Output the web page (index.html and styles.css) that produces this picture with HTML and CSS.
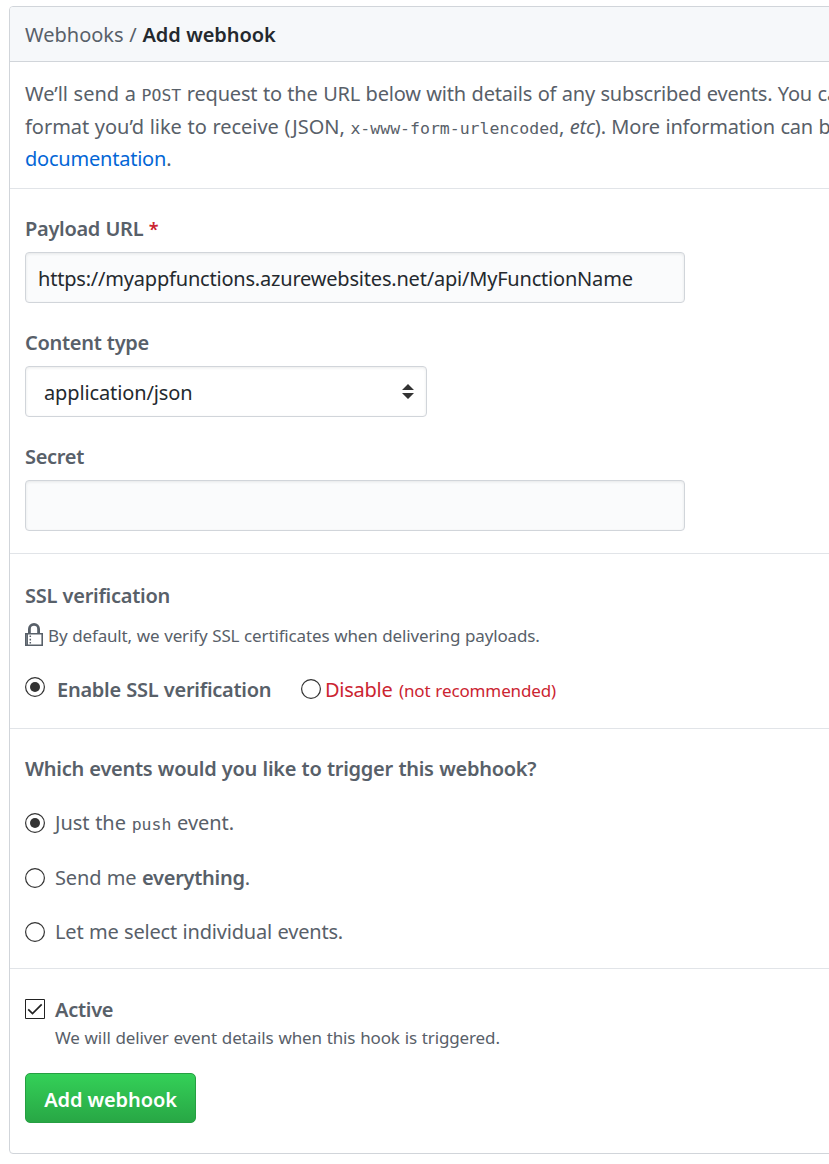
FILE: index.html
```html
<!DOCTYPE html>
<html lang="en">
<head>
<meta charset="utf-8">
<title>Add webhook</title>
<link rel="stylesheet" href="styles.css">
</head>
<body>
<main class="box">
  <header class="box-header"><span class="crumb">Webhooks / </span><strong class="current">Add webhook</strong></header>
  <section class="row intro">
    <p class="line"><span class="lead">We’ll send a </span><code>POST</code><span class="rest"> request to the URL below with details of any subscribed events. You ca</span></p>
    <p class="line"><span class="lead">format you’d like to receive (JSON, </span><code>x-www-form-urlencoded</code><span class="rest">, <em>etc</em>). More information can b</span></p>
    <p class="line"><a class="link" href="#">documentation</a>.</p>
  </section>
  <form class="form">
    <section class="row fields">
      <label class="label" for="url">Payload URL <span class="required">*</span></label>
      <input class="control" id="url" type="text" value="https://myappfunctions.azurewebsites.net/api/MyFunctionName">
      <label class="label">Content type</label>
      <div class="control select"><span class="select-text">application/json</span>
        <svg class="arrows" width="12" height="15" viewBox="0 0 12 15"><path fill="#333" d="M0 6 6 0l6 6zM0 9l6 6 6-6z"/></svg>
      </div>
      <label class="label" for="secret">Secret</label>
      <input class="control" id="secret" type="text">
    </section>
    <section class="row ssl">
      <h2 class="heading">SSL verification</h2>
      <p class="note">
        <svg class="lock" width="18" height="23" viewBox="0 0 18 23" fill="none" stroke="#586069"><path stroke-width="2.8" d="M4.4 11V6a4.6 4.6 0 0 1 9.2 0V11"/><path stroke-width="1.6" d="M.8 10.8h16.4v11.4H.8z"/><path stroke-width="1.5" d="M2.2 10v12.5"/><path stroke-width="1.5" stroke-dasharray="1.6 1.7" d="M5.3 12.5v8"/></svg>
        <span class="small">By default, we verify SSL certificates when delivering payloads.</span>
      </p>
      <div class="choices">
        <svg class="radio lifted" width="20" height="20" viewBox="0 0 20 20"><circle cx="10" cy="10" r="9.4" fill="#fff" stroke="#333" stroke-width="1.2"/><circle cx="10" cy="10" r="5" fill="#333"/></svg>
        <strong class="enable">Enable SSL verification</strong>
        <svg class="radio second" width="20" height="20" viewBox="0 0 20 20"><circle cx="10" cy="10" r="9.4" fill="#fff" stroke="#333" stroke-width="1.2"/></svg>
        <span class="disable">Disable</span><span class="small danger">(not recommended)</span>
      </div>
    </section>
    <section class="row events">
      <h2 class="heading">Which events would you like to trigger this webhook?</h2>
      <div class="option">
        <svg class="radio" width="20" height="20" viewBox="0 0 20 20"><circle cx="10" cy="10" r="9.4" fill="#fff" stroke="#333" stroke-width="1.2"/><circle cx="10" cy="10" r="5" fill="#333"/></svg>
        <span class="lead">Just the <code>push</code> event.</span>
      </div>
      <div class="option">
        <svg class="radio" width="20" height="20" viewBox="0 0 20 20"><circle cx="10" cy="10" r="9.4" fill="#fff" stroke="#333" stroke-width="1.2"/></svg>
        <span>Send me <strong>everything</strong>.</span>
      </div>
      <div class="option">
        <svg class="radio" width="20" height="20" viewBox="0 0 20 20"><circle cx="10" cy="10" r="9.4" fill="#fff" stroke="#333" stroke-width="1.2"/></svg>
        <span class="rest">Let me select individual events.</span>
      </div>
    </section>
    <section class="row submit">
      <div class="active">
        <svg class="check" width="20" height="20" viewBox="0 0 20 20"><path fill="#fff" stroke="#222" d="M.5.5h19v19H.5z"/><path fill="none" stroke="#222" stroke-width="1.7" d="m3.2 10.3 4.3 4.2 9.2-9.2"/></svg>
        <strong class="active-text">Active</strong>
      </div>
      <p class="small hint">We will deliver event details when this hook is triggered.</p>
      <button class="button" type="button">Add webhook</button>
    </section>
  </form>
</main>
</body>
</html>
```
FILE: styles.css
```css
* { box-sizing: border-box; }

body {
  margin: 0;
  padding: 6px 0 0 9px;
  height: 1164px;
  overflow: hidden;
  background: #fff;
  color: #586069;
  font: 20px/30px "Segoe UI", "Noto Sans", sans-serif;
  letter-spacing: -0.16px;
  word-spacing: 0.5px;
  white-space: nowrap;
}

p, h2 { margin: 0; }
strong { font-weight: 600; letter-spacing: -0.27px; }
code { font: 16.5px "DejaVu Sans Mono", monospace; letter-spacing: 0; }

.box {
  width: 840px;
  height: 1148px;
  border: 1px solid #d1d5da;
  border-radius: 4px;
  overflow: hidden;
}

.box-header {
  height: 55px;
  padding: 13px 15px 11px;
  background: #f6f8fa;
  border-bottom: 1px solid #d1d5da;
  white-space: pre;
}

.crumb { letter-spacing: 0; }
.current { color: #24292e; letter-spacing: -0.1px; }

.row { padding: 0 15px; border-bottom: 1px solid #e1e4e8; }
.row:last-child { border-bottom: 0; }

.intro { height: 127px; padding-top: 16px; }
.line { height: 32.5px; line-height: 32.5px; white-space: pre; }
.lead { letter-spacing: -0.03px; }
.rest { letter-spacing: -0.19px; }
.link { color: #0366d6; text-decoration: none; letter-spacing: -0.22px; }

.fields { display: flex; flex-direction: column; align-items: flex-start; height: 365px; padding-top: 25px; }
.label { flex: none; height: 30px; margin-bottom: 8px; font-weight: 600; letter-spacing: -0.3px; }
.required { color: #cb2431; font-size: 18px; }

.control {
  flex: none;
  width: 660px;
  height: 51px;
  margin: 0 0 25px;
  padding: 1px 12px 0;
  border: 1px solid #d1d5da;
  border-radius: 4px;
  background: #fafbfc;
  box-shadow: inset 0 1px 3px rgba(27, 31, 35, 0.09);
  color: #24292e;
  font: inherit;
  letter-spacing: -0.2px;
  outline: 0;
}

.control:last-child { margin-bottom: 0; }

.select {
  display: flex;
  align-items: center;
  justify-content: space-between;
  width: 402px;
  padding: 0 12px 0 18px;
  background: #fff;
}

.select-text { padding-top: 2px; letter-spacing: -0.12px; }

.ssl { height: 175px; padding-top: 27px; }
.heading { height: 30px; font-size: 20px; line-height: 30px; font-weight: 600; letter-spacing: -0.27px; }
.small { font-size: 17px; letter-spacing: -0.15px; }
.note { display: flex; align-items: center; gap: 5px; height: 30px; margin-top: 10px; }
.lock { margin-bottom: 3px; }
.choices { display: flex; align-items: center; height: 30px; margin-top: 24px; }
.radio, .check { flex: none; }
.lifted { margin-bottom: 6px; }
.second { margin-bottom: 3px; }
.enable { width: 256px; padding-left: 12px; }
.disable { width: 78px; padding-left: 4px; color: #cb2431; letter-spacing: -0.25px; }
.danger { padding-top: 1px; color: #cb2431; letter-spacing: -0.12px; }

.events { height: 240px; padding-top: 25px; }
.option { display: flex; align-items: center; gap: 10px; height: 30px; margin-top: 24.4px; }

.submit { padding-top: 25px; }
.active { display: flex; align-items: center; gap: 10px; height: 30px; }
.active-text { padding-top: 2px; }
.hint { height: 28px; padding-left: 30px; line-height: 28px; letter-spacing: -0.12px; }

.button {
  display: block;
  width: 171px;
  height: 50px;
  margin-top: 21px;
  padding: 3px 0 0;
  border: 1px solid #269f42;
  border-radius: 5px;
  background: linear-gradient(#34d058, #28a745);
  color: #fff;
  font: inherit;
  font-weight: 600;
  letter-spacing: -0.1px;
}
```
